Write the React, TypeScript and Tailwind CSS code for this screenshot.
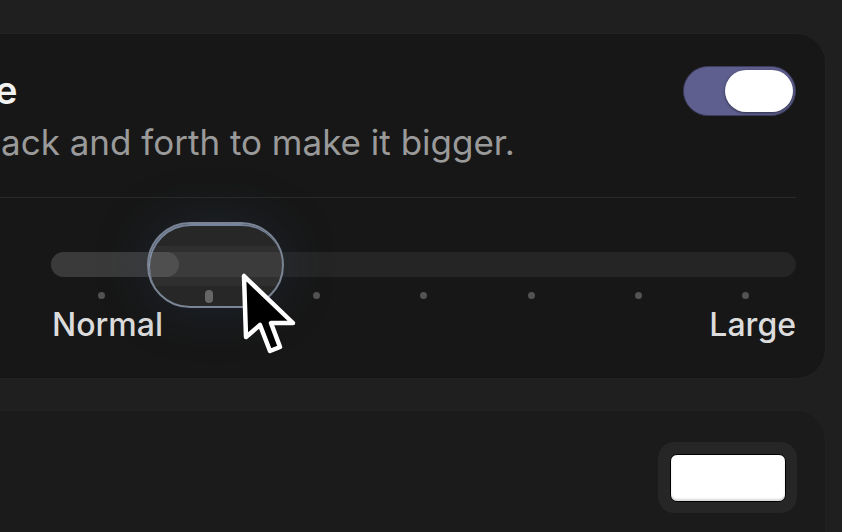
import React from 'react';

const dots = [0, 1, 2, 3, 4, 5, 6];

function Cursor() {
  return (
    <svg width="60" height="86" viewBox="-4 -4 60 86" className="absolute left-[189px] top-[20px]">
      <path
        d="M0 0 L2 61 L16 49 L26 75 L36 71 L27 47 L49 47 Z"
        fill="#000"
        stroke="#fff"
        strokeWidth="4.5"
        strokeLinejoin="round"
      />
    </svg>
  );
}

export default function App() {
  return (
    <div
      className="h-[532px] w-[842px] overflow-hidden bg-[#1f1f1f] pt-[33px] pr-[16px]"
      style={{ fontFamily: 'Inter, "Liberation Sans", sans-serif' }}
    >
      {/* Pointer card */}
      <div className="-ml-[100px] rounded-[30px] border border-[#222] bg-[#171717] pl-[150px] pr-[29px] pt-[34px] pb-[34px]">
        <div className="flex items-start justify-between">
          <div className="-ml-[50px] flex flex-col">
            <div className="-ml-[6px] text-[38px] leading-[44px] font-semibold text-[#f2f2f2]">e</div>
            <div className="mt-[9px] text-[35px] leading-[42px] text-[#9a9a9a]">ack and forth to make it bigger.</div>
          </div>
          <div className="-mt-[2px] flex h-[50px] w-[113px] items-center justify-end rounded-full border border-[#3c3d5c] bg-[#5e5f8f] pr-[2px]">
            <div className="h-[42px] w-[68px] rounded-full bg-white shadow-[0_1px_3px_rgba(0,0,0,0.5)]" />
          </div>
        </div>

        <div className="-ml-[150px] mt-[34px] h-px bg-[#2a2a2a]" />

        {/* Slider */}
        <div className="relative mt-[54px]">
          <div className="h-[25px] rounded-full bg-[#252525]">
            <div className="h-[25px] w-[128px] rounded-full bg-[#3a3a3a]" />
          </div>

          <div className="mt-[13px] flex items-start justify-between px-[47px]">
            {dots.map((d) =>
              d === 1 ? (
                <div key={d} className="h-[13px] w-[8px] rounded-full bg-[#5b5b5b]" />
              ) : (
                <div key={d} className="mt-[2px] h-[7px] w-[7px] rounded-full bg-[#535353]" />
              )
            )}
          </div>

          <div className="mt-[3px] flex justify-between text-[32px] leading-[38px] font-medium text-[#dcdcdc]">
            <span className="ml-[1px]">Normal</span>
            <span>Large</span>
          </div>

          {/* Glass thumb */}
          <div className="absolute left-[96px] top-[-30px] h-[86px] w-[137px] overflow-hidden rounded-full border-2 border-[#7a8494] bg-white/[0.07] shadow-[inset_1px_2px_0_rgba(170,195,235,0.6),0_0_50px_rgba(40,60,90,0.35)]">
            <div className="mt-[22px] h-[40px] w-full bg-white/[0.04]" />
          </div>

          <Cursor />
        </div>
      </div>

      {/* Appearance card */}
      <div className="-ml-[100px] mt-[31px] h-[200px] rounded-[30px] border border-[#222] bg-[#1b1b1b] pt-[31px] pr-[28px]">
        <div className="flex justify-end">
          <div className="flex h-[71px] w-[139px] items-center justify-center rounded-[16px] bg-[#262626]">
            <div className="h-[48px] w-[116px] rounded-[7px] border border-black bg-white shadow-[inset_0_-2px_2px_rgba(0,0,0,0.15)]" />
          </div>
        </div>
      </div>
    </div>
  );
}
